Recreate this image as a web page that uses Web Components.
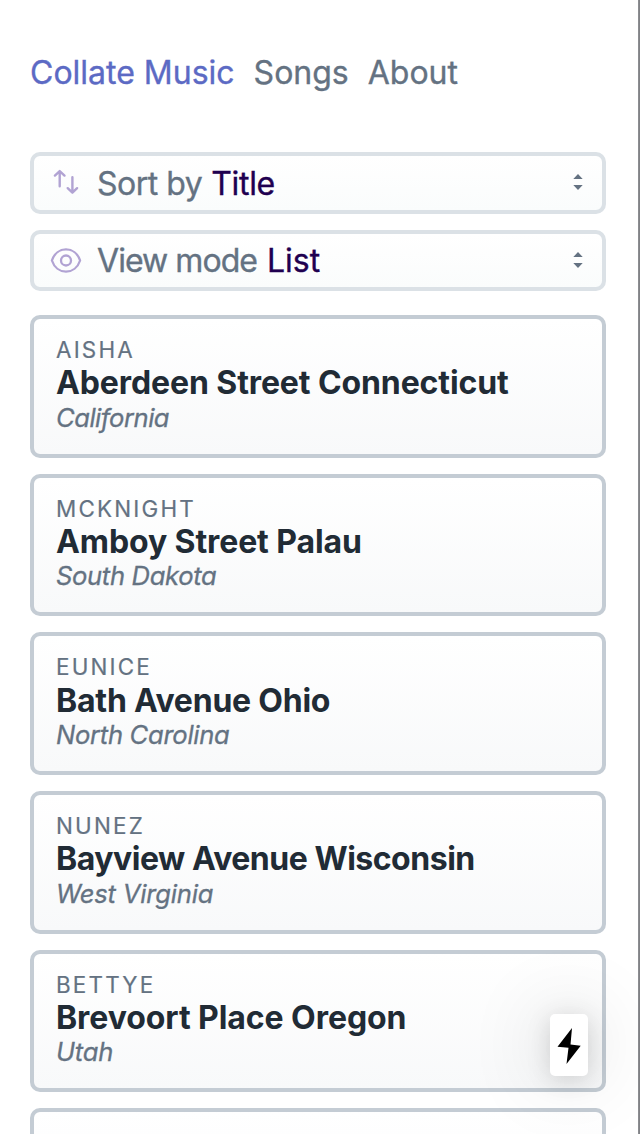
<!DOCTYPE html>
<html lang="en">
<head>
<meta charset="utf-8">
<title>Collate Music</title>
<style>
html,body{margin:0;height:100%;overflow:hidden;background:#fff}
body{font-family:Inter,"Liberation Sans",sans-serif;font-size:32px;color:#647282;-webkit-text-stroke:.35px currentColor}
</style>
</head>
<body>
<music-app></music-app>
<script>
const define = (name, html) => customElements.define(name, class extends HTMLElement {
  connectedCallback() {
    if (this.shadowRoot) return;
    const t = document.createElement('template');
    t.innerHTML = html;
    this.attachShadow({mode: 'open'}).append(t.content.cloneNode(true));
  }
});

define('nav-link', `<style>
:host{display:block;line-height:40px;white-space:nowrap;-webkit-text-stroke:.35px currentColor}
:host([active]){color:#5c6ac4}
</style><slot></slot>`);

define('select-field', `<style>
:host{display:flex;align-items:center;box-sizing:border-box;height:var(--h,62px);border:4px solid #dbe1e6;border-radius:10px;padding:0 19px 0 16px;background:linear-gradient(#fff,#fafcfc);white-space:nowrap}
.icon{display:flex;width:32px;height:32px;margin-right:15px;color:#b1a3d3}
.label{line-height:40px;padding-top:var(--drop,0);letter-spacing:var(--track,0)}
.value{line-height:40px;padding-top:var(--drop,0);margin-left:var(--gap,9px);color:#1f0050;letter-spacing:var(--vtrack,0);-webkit-text-stroke:.35px #1f0050}
.arrows{margin:0 0 2px auto}
</style><span class="icon"><slot name="icon"></slot></span><span class="label"><slot></slot></span><span class="value"><slot name="value"></slot></span>
<svg class="arrows" width="10" height="16" viewBox="0 0 10 16" fill="#647282"><path d="M.3 5 5 0l4.700 5zM.3 11H9.700L5 16z"/></svg>`);

define('song-card', `<style>
:host{display:block;box-sizing:border-box;height:142.700px;flex:none;border:4px solid #c4ccd4;border-radius:10px;padding:19px 22px;background:linear-gradient(#fff,#f8f9fa);white-space:nowrap}
.artist{font-size:22.400px;line-height:23.400px;letter-spacing:2.200px;text-transform:uppercase;-webkit-text-stroke:.2px currentColor}
.title{font-weight:700;line-height:43.200px;color:#212b35;letter-spacing:var(--t,-.1px);-webkit-text-stroke:0}
.place{font-size:25.600px;line-height:26.800px;font-style:italic;letter-spacing:var(--p,-.2px);-webkit-text-stroke:.3px currentColor}
</style><div class="artist"><slot name="artist"></slot></div><div class="title"><slot></slot></div><div class="place"><slot name="place"></slot></div>`);

define('quick-action', `<style>
:host{position:absolute;left:550px;top:1014px;width:38px;height:62px;border-radius:5px;background:#fff;display:block;box-shadow:0 0 80px rgba(0,0,0,.19),0 4px 24px rgba(0,0,0,.14)}
svg{display:block}
</style><svg width="38" height="62" viewBox="0 0 38 62"><path d="M22 14 7.500 32.800l11 1L16.500 50 30.700 31.800l-10.200-1.200z"/></svg>`);

define('music-app', `<style>
:host{display:flex;flex-direction:column;position:relative;box-sizing:border-box;width:640px;height:1134px;overflow:hidden;padding:53px 34px 0 30px}
nav{display:flex;gap:19px;height:99px;flex:none}
.filters{display:flex;flex-direction:column;gap:16px;flex:none}
.songs{display:flex;flex-direction:column;gap:16px;margin-top:24px}
.edge{position:absolute;right:0;top:0;width:2px;height:1134px;background:linear-gradient(90deg,#929397,#7b7c80)}
</style>
<nav><nav-link active>Collate Music</nav-link><nav-link>Songs</nav-link><nav-link>About</nav-link></nav>
<div class="filters">
<select-field style="--track:-.5px;--vtrack:-.3px;--drop:2px">
<svg slot="icon" width="32" height="32" viewBox="0 0 32 32" fill="none" stroke="currentColor" stroke-width="2.400" stroke-linecap="round" stroke-linejoin="round"><path d="M9.700 19.300V4.200M4.900 8.600l4.800-4.500 4.800 4.500M22.400 10.200v15.400M17.700 21.200l4.700 4.500 4.700-4.500"/></svg>
Sort by<span slot="value">Title</span></select-field>
<select-field style="--h:61px;--track:-.95px;--gap:10px">
<svg slot="icon" width="32" height="32" viewBox="0 0 32 32" fill="none" stroke="currentColor" stroke-width="2.300"><path d="M1.900 15.500C4.200 8.500 9.800 4.400 16 4.400s11.800 4.100 14.100 11.100C27.800 22.500 22.200 26.600 16 26.600S4.200 22.500 1.900 15.500Z" stroke-linejoin="round"/><circle cx="16" cy="15.500" r="5"/></svg>
View mode<span slot="value">List</span></select-field>
</div>
<div class="songs">
<song-card style="--p:-.5px"><span slot="artist">Aisha</span>Aberdeen Street Connecticut<span slot="place">California</span></song-card>
<song-card style="--p:-.35px"><span slot="artist">McKnight</span>Amboy Street Palau<span slot="place">South Dakota</span></song-card>
<song-card style="--t:-.22px;--p:-.3px"><span slot="artist">Eunice</span>Bath Avenue Ohio<span slot="place">North Carolina</span></song-card>
<song-card style="--t:-.48px"><span slot="artist">Nunez</span>Bayview Avenue Wisconsin<span slot="place">West Virginia</span></song-card>
<song-card style="--t:-.07px"><span slot="artist">Bettye</span>Brevoort Place Oregon<span slot="place">Utah</span></song-card>
<song-card></song-card>
</div>
<div class="edge"></div>
<quick-action></quick-action>`);
</script>
</body>
</html>
